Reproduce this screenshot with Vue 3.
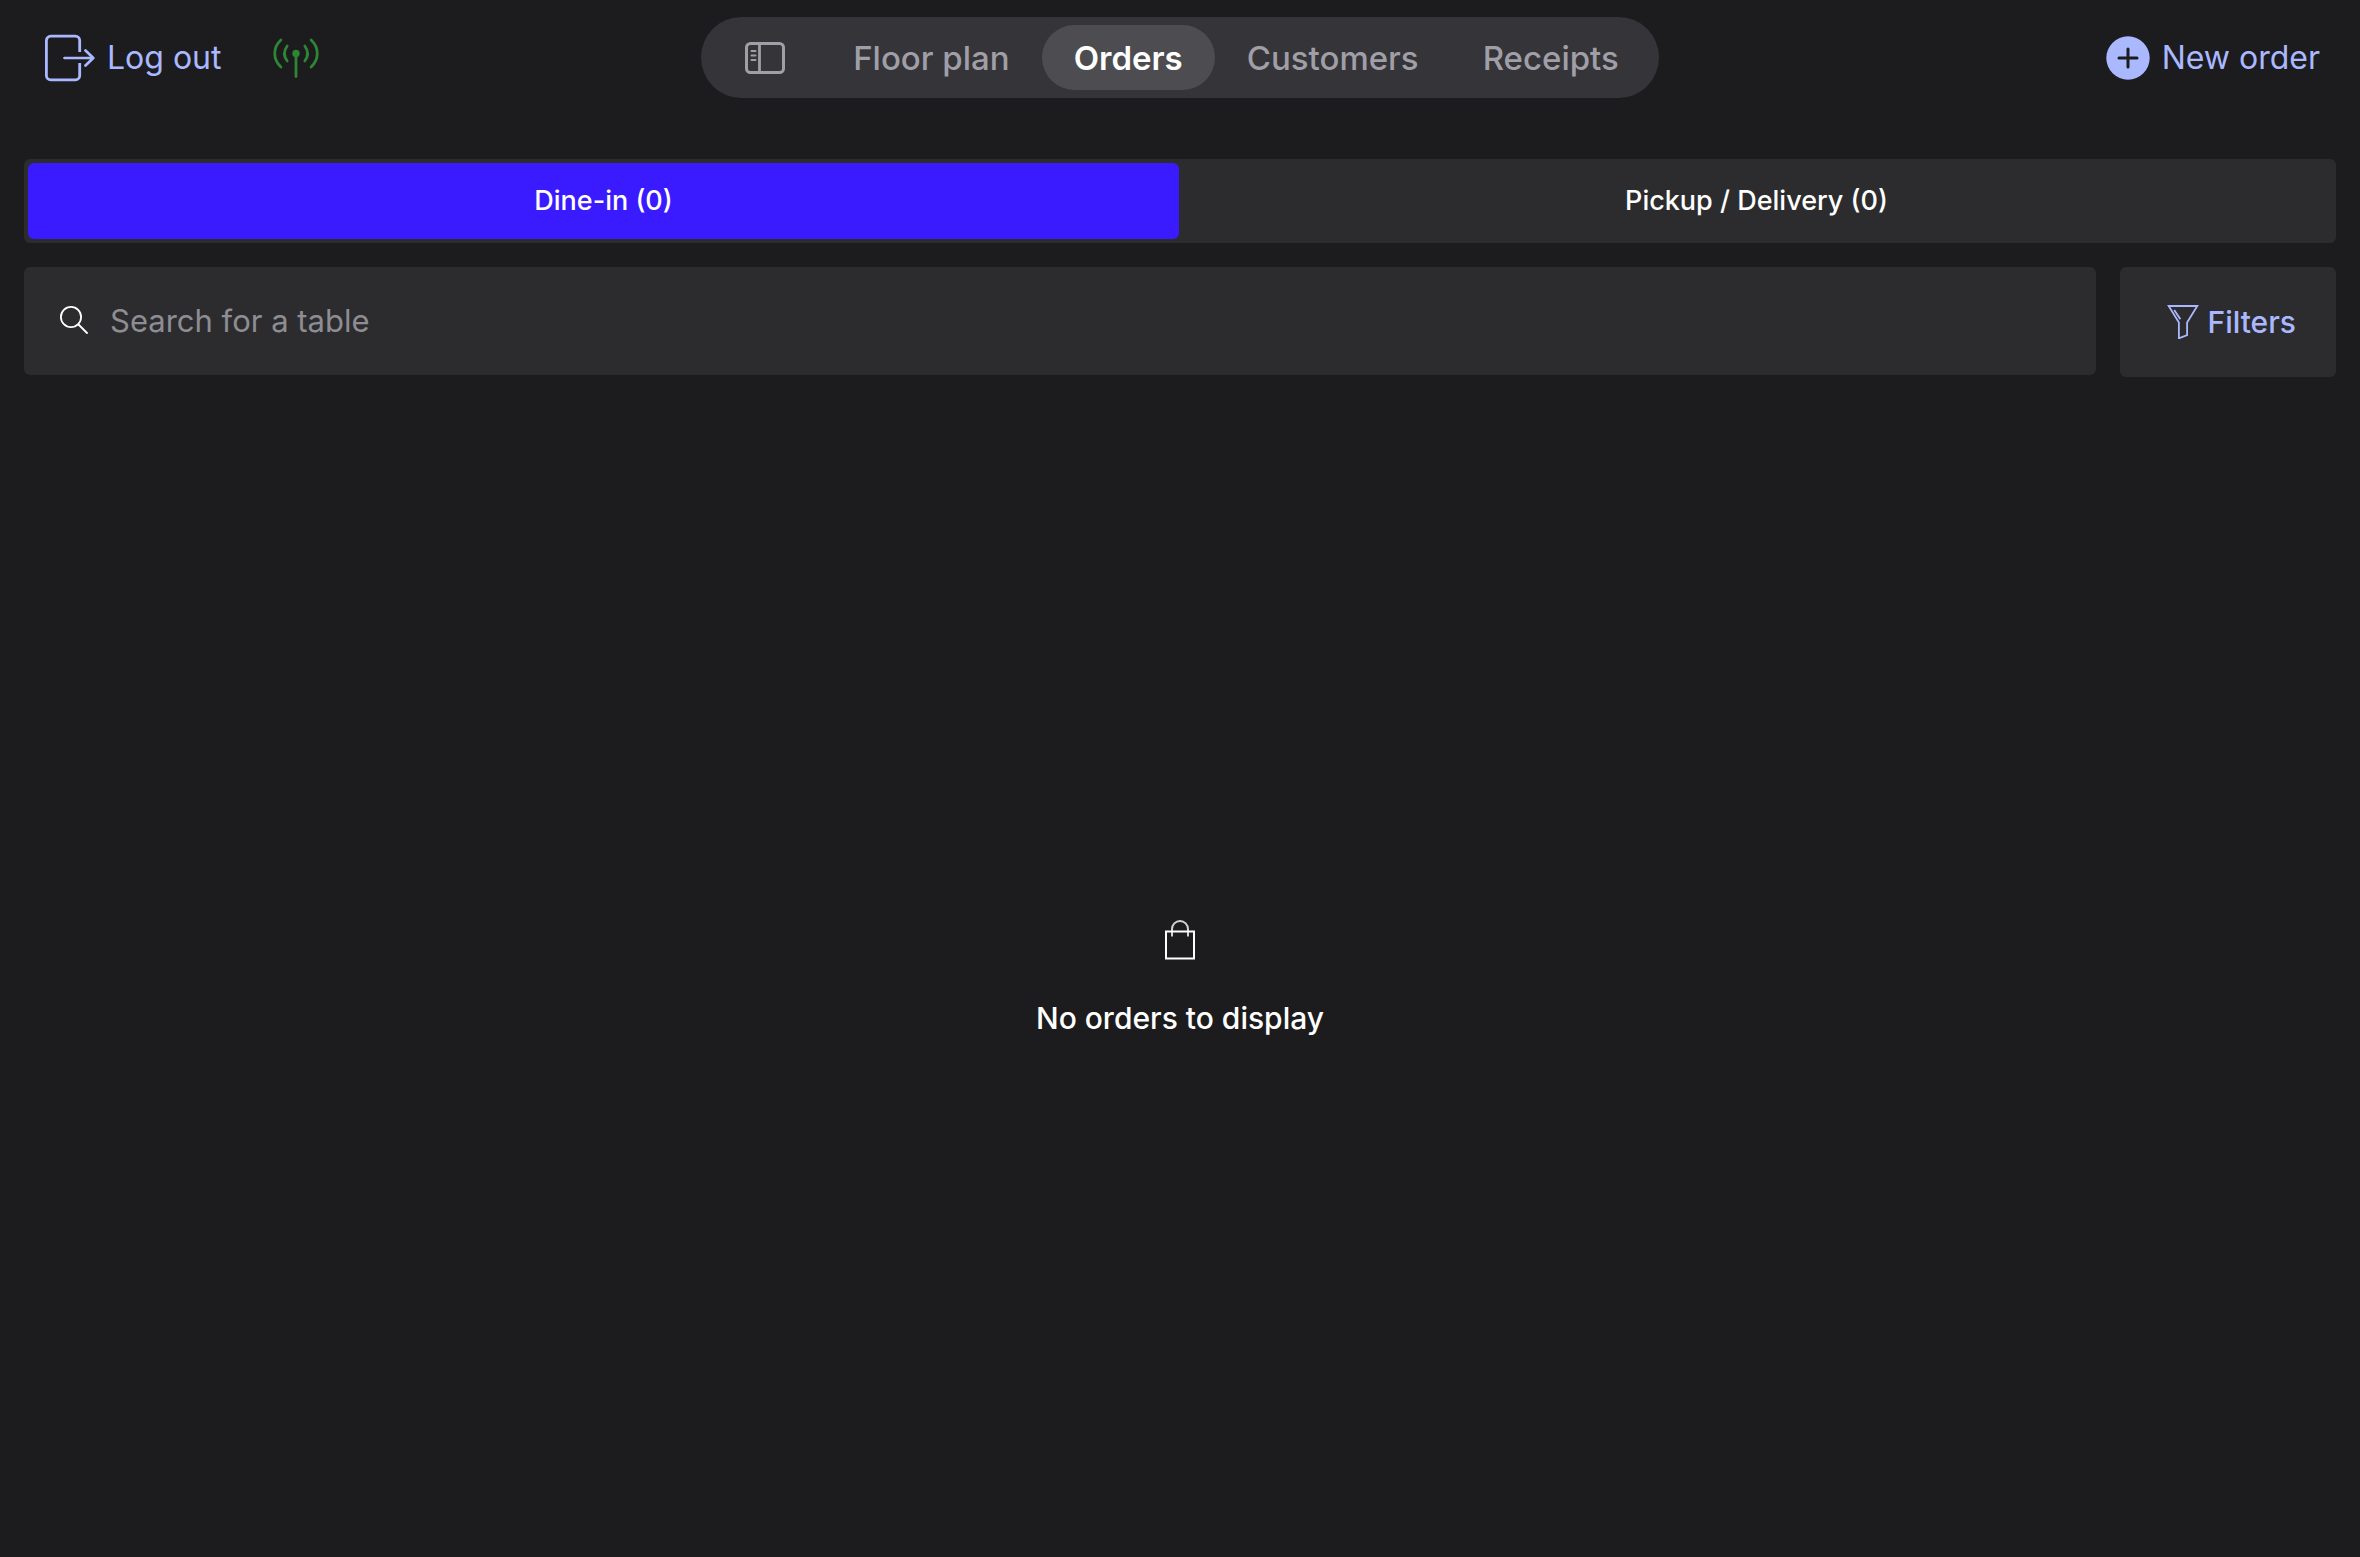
<script setup>
import { ref } from 'vue'

const sections = ['Floor plan', 'Orders', 'Customers', 'Receipts']
const activeSection = ref('Orders')

const orderTypes = [
  { id: 'dine-in', label: 'Dine-in', count: 0 },
  { id: 'pickup', label: 'Pickup / Delivery', count: 0 },
]
const activeType = ref('dine-in')
const query = ref('')
</script>

<template>
  <div class="page">
    <header class="topbar">
      <div class="side start">
        <button class="action" type="button">
          <svg class="logout-icon" viewBox="0 0 50 48" fill="none" stroke="currentColor" stroke-linecap="round" stroke-linejoin="round" aria-hidden="true">
            <path d="M34.7 18V6.500a4.300 4.300 0 0 0-4.300-4.300H5.700a4.300 4.300 0 0 0-4.300 4.300v35a4.300 4.300 0 0 0 4.300 4.300h24.700a4.300 4.300 0 0 0 4.300-4.300V29" stroke-width="2.800" stroke-linecap="butt" />
            <path d="M19.500 24H48M40.500 16.500 48.300 24l-7.800 7.500" stroke-width="2.700" />
          </svg>
          <span>Log out</span>
        </button>
        <svg class="signal-icon" viewBox="0 0 46 40" fill="none" stroke="currentColor" stroke-width="2.800" stroke-linecap="round" role="img" aria-label="Connected">
          <circle cx="23" cy="15.500" r="3.700" fill="currentColor" stroke="none" />
          <path d="M23 16v22.500M14.200 8Q8.600 15.500 14.200 23M31.800 8Q37.400 15.500 31.800 23M7.900 2C-.3 9.500-.3 21.500 7.900 29M38.100 2C46.300 9.500 46.300 21.500 38.100 29" />
        </svg>
      </div>

      <nav class="sections" aria-label="Sections">
        <button class="section sidebar-toggle" type="button" aria-label="Toggle sidebar">
          <svg viewBox="0 0 40 32" fill="none" stroke="currentColor" stroke-linecap="round" aria-hidden="true">
            <rect x="1.500" y="1.500" width="37" height="29" rx="4" stroke-width="3" />
            <path d="M14.500 2v28" stroke-width="2.800" />
            <path d="M6.500 9h4M6.500 13.500h4M6.500 18h4" stroke-width="2" />
          </svg>
        </button>
        <button
          v-for="name in sections"
          :key="name"
          type="button"
          class="section"
          :class="{ active: name === activeSection }"
          :aria-current="name === activeSection ? 'page' : undefined"
          @click="activeSection = name"
        >{{ name }}</button>
      </nav>

      <div class="side end">
        <button class="action" type="button">
          <svg class="plus-icon" viewBox="0 0 44 44" aria-hidden="true">
            <circle cx="22" cy="22" r="21.700" fill="currentColor" />
            <path d="M22 13v18M13 22h18" stroke="#1c1c1e" stroke-width="3" stroke-linecap="round" />
          </svg>
          <span>New order</span>
        </button>
      </div>
    </header>

    <main class="content">
      <div class="types" role="group" aria-label="Order type">
        <button
          v-for="type in orderTypes"
          :key="type.id"
          type="button"
          class="type"
          :class="{ active: type.id === activeType }"
          :aria-pressed="type.id === activeType"
          @click="activeType = type.id"
        >{{ type.label }} ({{ type.count }})</button>
      </div>

      <div class="tools">
        <label class="search">
          <svg class="search-icon" viewBox="0 0 28 28" fill="none" stroke="currentColor" stroke-width="1.800" stroke-linecap="round" aria-hidden="true">
            <circle cx="11" cy="11" r="10.100" />
            <path d="m18.500 18.500 8.500 8.500" />
          </svg>
          <input v-model="query" type="text" placeholder="Search for a table" aria-label="Search for a table" />
        </label>
        <button class="filters" type="button">
          <svg class="funnel-icon" viewBox="0 0 32 34" fill="none" stroke="currentColor" stroke-width="1.800" aria-hidden="true">
            <path d="M1.700 1h28.600L20.100 17.400v12.700l-8.200 3.200V17.400z" />
            <path d="m7.200 5 6.200 9.300" />
          </svg>
          <span>Filters</span>
        </button>
      </div>

      <section class="empty">
        <svg class="bag-icon" viewBox="0 0 32 40" fill="none" stroke="currentColor" stroke-width="2" aria-hidden="true">
          <path d="M2 11.500h28v27H2z" />
          <path d="M8 16.500V9a8 8 0 0 1 16 0v7.500" stroke-opacity=".8" />
        </svg>
        <p>No orders to display</p>
      </section>
    </main>
  </div>
</template>

<style>
body {
  background: #1c1c1e;
}
</style>

<style scoped>
.page {
  display: flex;
  flex-direction: column;
  min-height: 100vh;
  background: #1c1c1e;
  color: #fff;
  font-family: Inter, "Liberation Sans", sans-serif;
  font-size: 32px;
  line-height: 40px;
}

button,
input {
  margin: 0;
  padding: 0;
  border: 0;
  background: none;
  color: inherit;
  font: inherit;
}

button {
  cursor: pointer;
}

svg {
  display: block;
  flex: none;
}

.topbar {
  display: grid;
  grid-template-columns: 1fr auto 1fr;
  align-items: center;
  padding: 17px 40px 0;
}

.side {
  display: flex;
  align-items: center;
  gap: 52px;
}

.start {
  padding-left: 5px;
}

.end {
  justify-content: flex-end;
}

.action {
  display: flex;
  align-items: center;
  gap: 12px;
  color: #aab8ff;
}

.logout-icon {
  width: 50px;
  height: 48px;
}

.signal-icon {
  width: 46px;
  height: 40px;
  color: #2e8533;
}

.plus-icon {
  width: 44px;
  height: 44px;
}

.sections {
  display: flex;
  padding: 8px;
  border-radius: 41px;
  background: #353438;
}

.section {
  height: 65px;
  padding: 0 32px;
  border-radius: 33px;
  color: #a09fa7;
  font-size: 33px;
  font-weight: 500;
}

.section.active {
  background: #4d4c51;
  color: #fff;
  font-weight: 600;
}

.sidebar-toggle {
  padding: 0 36px;
}

.sidebar-toggle svg {
  width: 40px;
  height: 32px;
}

.content {
  display: flex;
  flex: 1;
  flex-direction: column;
  gap: 24px;
  padding: 61px 24px 0;
}

.types {
  display: flex;
  gap: 2px;
  padding: 4px;
  border-radius: 6px;
  background: #2c2c2e;
}

.type {
  flex: 1;
  height: 76px;
  border-radius: 6px;
  font-size: 27px;
  font-weight: 500;
}

.type.active {
  background: #3a1aff;
}

.tools {
  display: flex;
  align-items: flex-start;
  gap: 24px;
}

.search {
  display: flex;
  flex: 1;
  align-items: center;
  gap: 22px;
  height: 106px;
  padding: 0 36px 2px;
  border-radius: 6px;
  background: #2c2c2e;
  font-size: 31px;
}

.search-icon {
  width: 28px;
  height: 28px;
}

.search input {
  flex: 1;
  min-width: 0;
  height: 48px;
  outline: none;
}

.search input::placeholder {
  color: #8e8d93;
  opacity: 1;
}

.filters {
  display: flex;
  align-items: center;
  justify-content: flex-end;
  gap: 8px;
  min-width: 216px;
  height: 110px;
  padding: 0 40px;
  border-radius: 6px;
  background: #2c2c2e;
  color: #aab8ff;
  font-size: 30px;
  font-weight: 500;
}

.funnel-icon {
  width: 32px;
  height: 34px;
}

.empty {
  display: flex;
  flex: 1;
  flex-direction: column;
  align-items: center;
  justify-content: center;
  gap: 38px;
}

.bag-icon {
  width: 32px;
  height: 40px;
}

.empty p {
  margin: 0;
  font-size: 30px;
  font-weight: 500;
}
</style>
